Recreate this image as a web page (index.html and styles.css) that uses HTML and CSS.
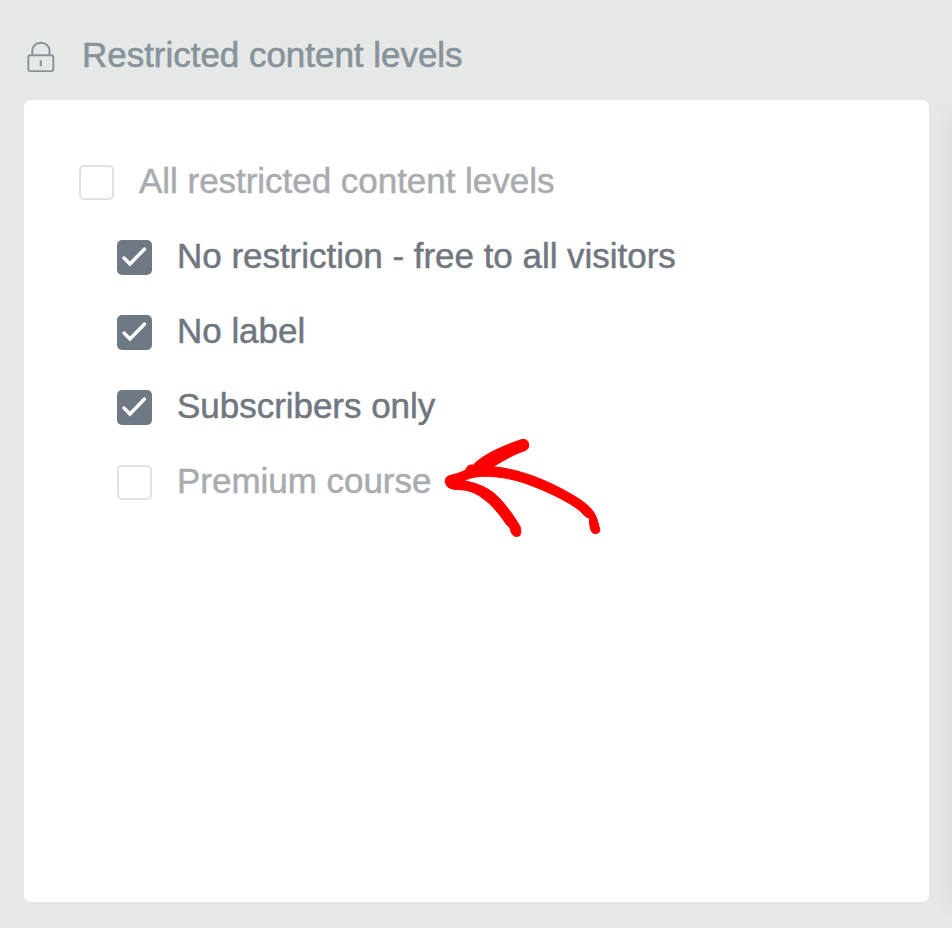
FILE: index.html
```html
<!DOCTYPE html>
<html lang="en">
<head>
<meta charset="utf-8">
<title>Restricted content levels</title>
<link rel="stylesheet" href="styles.css">
</head>
<body>
<header class="heading">
  <svg class="lock" viewBox="0 0 28 32" fill="none" stroke="currentColor" stroke-width="1.9">
    <rect x="1.3" y="14.3" width="25" height="15.8" rx="2"/>
    <path d="M5.3 14.5V9.6a8.6 7.9 0 0 1 17.2 0v4.9"/>
    <path d="M13.8 19.3v5.9" stroke-width="2.2"/>
  </svg>
  <h1 class="title">Restricted content levels</h1>
</header>
<main class="panel">
  <ul class="levels">
    <li class="level"><span class="box"></span><span class="label">All restricted content levels</span></li>
    <li class="level child checked"><span class="box"><svg class="tick" viewBox="0 0 35 35"><path d="M7 18l6 6L27.5 9"/></svg></span><span class="label">No restriction - free to all visitors</span></li>
    <li class="level child checked"><span class="box"><svg class="tick" viewBox="0 0 35 35"><path d="M7 18l6 6L27.5 9"/></svg></span><span class="label">No label</span></li>
    <li class="level child checked"><span class="box"><svg class="tick" viewBox="0 0 35 35"><path d="M7 18l6 6L27.5 9"/></svg></span><span class="label">Subscribers only</span></li>
    <li class="level child"><span class="box"></span><span class="label">Premium course</span></li>
  </ul>
</main>
<svg class="arrow" viewBox="0 0 540 360">
  <path d="M262 28C277 27 282 37 281 48C280 60 271 61 258 66C232 76 202 93 174 110C262 118 350 157 418 198C466 227 482 246 490 282L494 297C496 306 490 311 482 311C470 311 464 302 463 264C451 263 448 254 438 246C411 219 335 183 274 161C217 141 132 128 87 152C126 160 158 172 184 196C211 222 231 250 254 287C259 298 259 309 254 317C246 321 237 320 232 313C227 307 227 297 223 291C214 286 210 276 203 267C186 244 167 221 145 206C126 192 108 181 77 179C58 179 43 177 36 168C29 159 28 146 38 139C52 133 77 130 93 119C96 107 103 104 115 105C143 73 213 44 262 28Z"/>
</svg>
</body>
</html>
```
FILE: styles.css
```css
* {
  box-sizing: border-box;
}

body {
  margin: 0;
  height: 928px;
  padding: 0 23px 26px 24px;
  display: flex;
  flex-direction: column;
  overflow: hidden;
  background: #e5e8e7;
  font-family: "Liberation Sans", Arial, sans-serif;
  font-size: 35px;
  line-height: 40px;
  letter-spacing: -.03px;
}

body::after {
  content: "";
  position: absolute;
  top: 122px;
  right: -21px;
  bottom: 28px;
  width: 20px;
  box-shadow: 0 0 25px rgba(60, 75, 70, .13);
}

.heading {
  flex: none;
  display: flex;
  align-items: flex-start;
  height: 100px;
  padding: 35px 0 0 3px;
  gap: 27px;
  color: #87939a;
}

.lock {
  width: 28px;
  height: 32px;
  margin-top: 6px;
}

.title {
  margin: 0;
  font-size: 35px;
  font-weight: 400;
  white-space: nowrap;
  -webkit-text-stroke: .6px currentColor;
}

.panel {
  flex: 1;
  padding: 45px 55px;
  border-radius: 7px;
  background: #fff;
}

.levels {
  margin: 0;
  padding: 0;
  list-style: none;
}

.level {
  display: flex;
  align-items: center;
  gap: 25px;
  height: 75px;
  color: #a9abaf;
}

.child {
  padding-left: 38px;
}

.checked {
  color: #70777f;
}

.box {
  flex: none;
  width: 35px;
  height: 35px;
  border: 2px solid #e0e1e1;
  border-radius: 5px;
}

.checked .box {
  border: 0;
  background: #6f7986;
}

.tick {
  display: block;
  fill: none;
  stroke: #fff;
  stroke-width: 3.4;
  stroke-linecap: round;
}

.label {
  margin-top: -3px;
  white-space: nowrap;
  -webkit-text-stroke: .5px currentColor;
}

.arrow {
  position: absolute;
  left: 435px;
  top: 430px;
  width: 180px;
  height: 120px;
  fill: #f00;
  stroke: #f00;
  stroke-width: 3;
}
```
